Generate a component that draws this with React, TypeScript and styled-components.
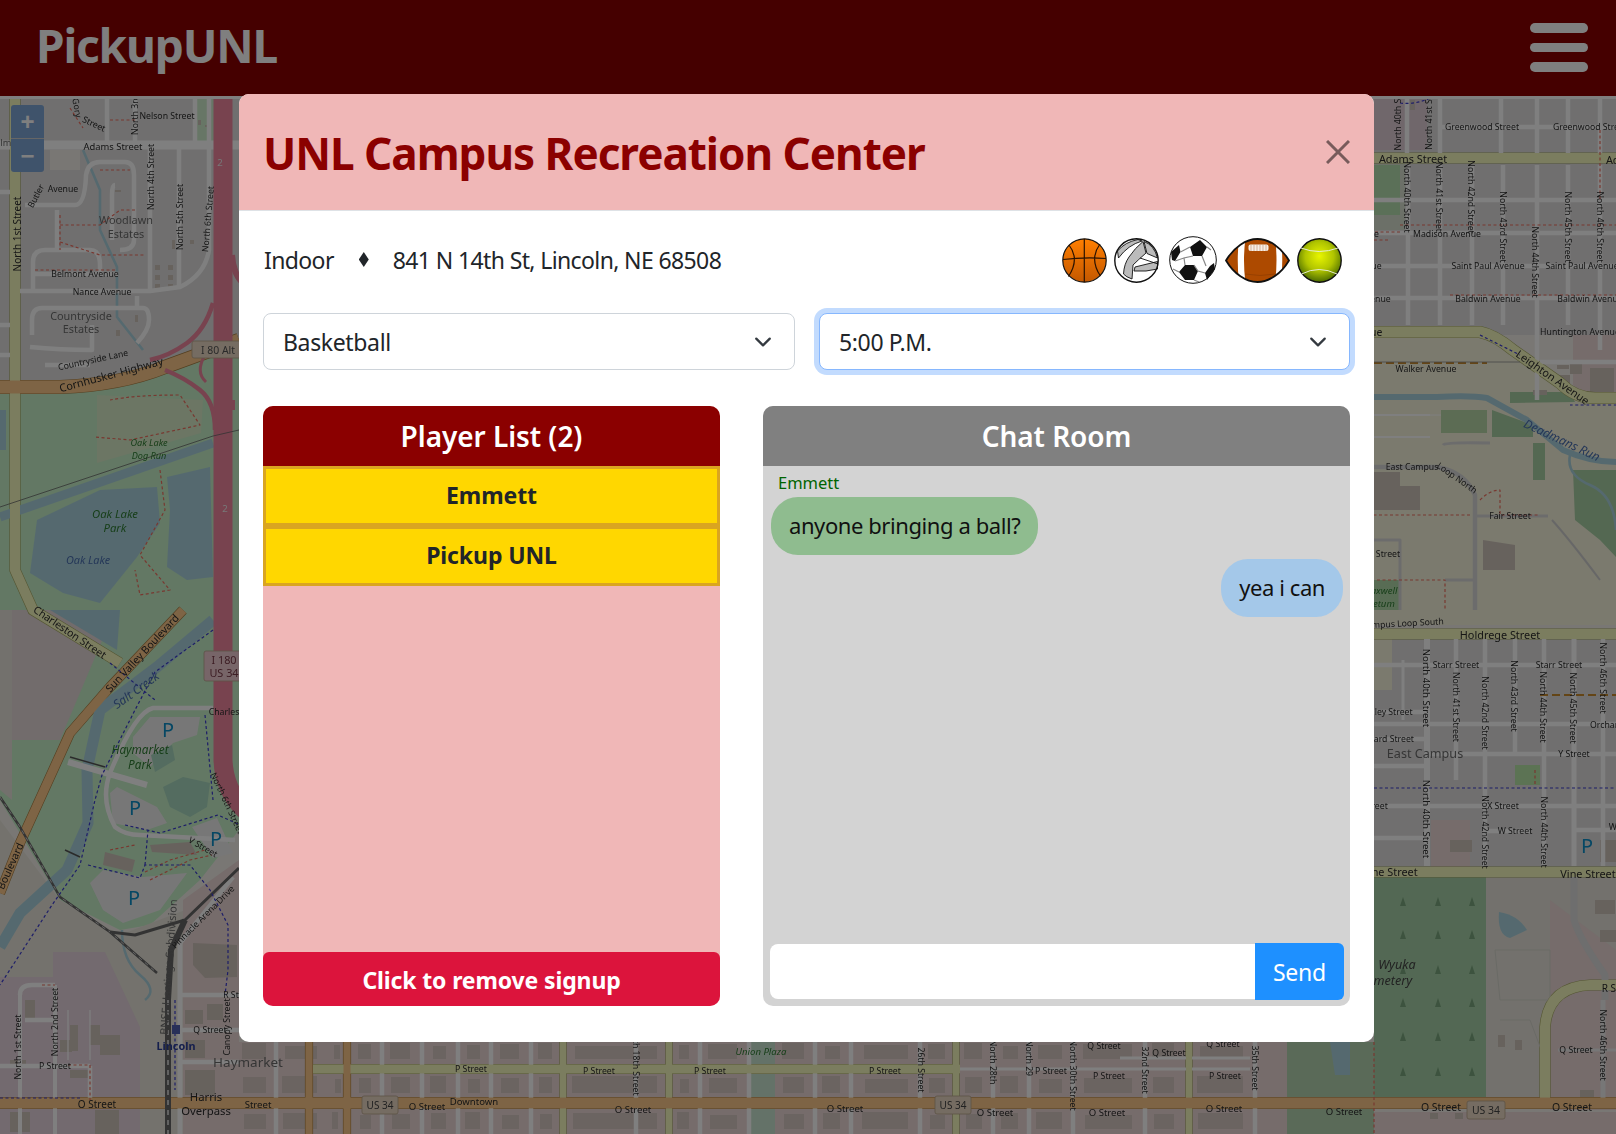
import React from "react";
import styled, { createGlobalStyle } from "styled-components";

const GlobalStyle = createGlobalStyle`
  html, body { margin: 0; padding: 0; background: #fff; }
  * { box-sizing: border-box; }
  #root { font-family: "Noto Sans", "Open Sans", sans-serif; color: #212529; }
`;

const Page = styled.div`
  position: relative;
  width: 1616px;
  height: 1134px;
  overflow: hidden;
  display: flex;
  flex-direction: column;
`;

const TopBar = styled.header`
  height: 96px;
  flex: none;
  background: #8b0000;
  display: flex;
  align-items: center;
  justify-content: space-between;
  padding: 0 28px 0 36px;
`;

const Brand = styled.div`
  color: #fff;
  font-size: 46px;
  font-weight: 700;
  letter-spacing: -1.15px;
  margin-bottom: 7px;
`;

const Burger = styled.div`
  width: 58px;
  display: flex;
  flex-direction: column;
  gap: 10px;
  margin-bottom: 1px;
`;

const BurgerBar = styled.span`
  display: block;
  height: 9.5px;
  border-radius: 5px;
  background: #fff;
`;

const MapArea = styled.main`
  position: relative;
  flex: 1;
  border-top: 3px solid #fff;
  overflow: hidden;
  background: #f2efe9;
`;

const MapSvg = styled.svg`
  display: block;
  width: 1616px;
  height: 1035px;
  filter: blur(0.55px);
`;

const ZoomControl = styled.div`
  position: absolute;
  left: 11px;
  top: 6px;
  width: 33px;
  height: 67px;
  border-radius: 3px;
  background: #7ea6d6;
  display: flex;
  flex-direction: column;
`;

const ZoomButton = styled.div`
  flex: 1;
  display: flex;
  align-items: center;
  justify-content: center;
  color: #fff;
  font: 700 24px "Liberation Sans", sans-serif;
  & + & { border-top: 1px solid #ccc; }
`;

const Backdrop = styled.div`
  position: absolute;
  inset: 0;
  background: rgba(0, 0, 0, 0.5);
`;

const Modal = styled.section`
  position: absolute;
  left: 239px;
  top: 94px;
  width: 1135px;
  height: 948px;
  background: #fff;
  border-radius: 10px;
  display: flex;
  flex-direction: column;
  overflow: hidden;
`;

const ModalHead = styled.div`
  height: 117px;
  flex: none;
  background: #f0b7b7;
  border-bottom: 1px solid #dee2e6;
  display: flex;
  align-items: center;
  justify-content: space-between;
  padding: 0 24px;
`;

const ModalTitle = styled.h1`
  margin: 0;
  color: #8b0000;
  font-size: 44px;
  font-weight: 700;
  letter-spacing: -1px;
  line-height: 1;
  padding-top: 1px;
`;

const CloseIcon = styled.svg`
  width: 24px;
  height: 24px;
  display: block;
`;

const ModalBody = styled.div`
  flex: 1;
  min-height: 0;
  display: flex;
  flex-direction: column;
  padding: 0 24px 36px;
`;

const InfoRow = styled.div`
  height: 98px;
  margin-bottom: 4px;
  flex: none;
  display: flex;
  align-items: center;
  justify-content: space-between;
  font-size: 23px;
  letter-spacing: -0.62px;
  padding-right: 8px;
`;

const InfoText = styled.div`
  display: flex;
  align-items: center;
  padding-left: 1px;
  padding-bottom: 1px;
`;

const Diamond = styled.span`
  width: 10px;
  height: 15px;
  margin: 0 24px 0 25px;
  background: #212529;
  clip-path: polygon(50% 0, 100% 50%, 50% 100%, 0 50%);
`;

const BallRow = styled.div`
  display: flex;
  align-items: center;
  gap: 7px;
`;

const BallIcon = styled.svg<{ $gapBefore?: number }>`
  display: block;
  flex: none;
  margin-left: ${(p) => p.$gapBefore ?? 0}px;
`;

const SelectRow = styled.div`
  display: grid;
  grid-template-columns: 532px 531px;
  gap: 24px;
  height: 57px;
  flex: none;
`;

const SelectBox = styled.div<{ $focus?: boolean }>`
  display: flex;
  align-items: center;
  justify-content: space-between;
  padding: 0 22px 0 19px;
  font-size: 23px;
  letter-spacing: -0.35px;
  background: #fff;
  border-radius: 8px;
  border: 1px solid ${(p) => (p.$focus ? "#86b7fe" : "#ced4da")};
  box-shadow: ${(p) => (p.$focus ? "0 0 0 5px #c2dbfe" : "none")};
`;

const Chevron = styled.svg`
  width: 18px;
  height: 18px;
  display: block;
`;

const PanelGrid = styled.div`
  flex: 1;
  min-height: 0;
  margin-top: 36px;
  display: grid;
  grid-template-columns: 457px 587px;
  gap: 43px;
`;

const Panel = styled.div<{ $bg: string }>`
  display: flex;
  flex-direction: column;
  min-height: 0;
  border-radius: 10px;
  overflow: hidden;
  background: ${(p) => p.$bg};
`;

const PanelHead = styled.div<{ $bg: string }>`
  height: 60px;
  flex: none;
  display: flex;
  align-items: center;
  justify-content: center;
  background: ${(p) => p.$bg};
  color: #fff;
  font-size: 28px;
  font-weight: 600;
  letter-spacing: -0.05px;
`;

const PlayerRows = styled.div`
  flex: 1;
`;

const PlayerRow = styled.div`
  height: 60px;
  padding-bottom: 2px;
  display: flex;
  align-items: center;
  justify-content: center;
  background: #ffd700;
  border: 3px solid #daa520;
  font-size: 23px;
  font-weight: 700;
  letter-spacing: -0.1px;
`;

const RemoveButton = styled.button`
  height: 54px;
  flex: none;
  border: 0;
  padding: 1px 0 0;
  border-radius: 6px;
  background: #dc143c;
  color: #fff;
  font-family: inherit;
  font-size: 23px;
  font-weight: 700;
  letter-spacing: -0.13px;
`;

const ChatLog = styled.div`
  flex: 1;
  display: flex;
  flex-direction: column;
  padding: 7px 7px 0 8px;
`;

const Sender = styled.div`
  color: #006400;
  font-size: 16.5px;
  line-height: 20px;
  margin: 0 0 4px 7px;
`;

const Bubble = styled.div<{ $mine?: boolean }>`
  align-self: ${(p) => (p.$mine ? "flex-end" : "flex-start")};
  height: 58px;
  display: flex;
  align-items: center;
  padding: 0 18px 3px;
  margin-bottom: 4px;
  border-radius: 27px;
  background: ${(p) => (p.$mine ? "#a4c8e9" : "#8fbc8f")};
  color: #111;
  font-size: 22px;
  letter-spacing: -0.42px;
`;

const Composer = styled.div`
  display: flex;
  align-items: center;
  flex: none;
  height: 57px;
  margin: 0 6px 6px 7px;
`;

const ChatInput = styled.input`
  flex: 1;
  min-width: 0;
  height: 55px;
  border: 0;
  outline: 0;
  border-radius: 8px 0 0 8px;
  background: #fff;
`;

const SendButton = styled.button`
  width: 89px;
  height: 57px;
  border: 0;
  padding: 0;
  border-radius: 0 6px 6px 0;
  background: #1e90ff;
  color: #fff;
  font-family: inherit;
  font-size: 23px;
  letter-spacing: -0.2px;
`;

const MapLabel = styled.text<{ $size?: number; $color?: string; $italic?: boolean; $bold?: boolean }>`
  font-family: "Noto Sans", "Open Sans", sans-serif;
  font-size: ${(p) => (p.$size ?? 10) * 0.87}px;
  font-style: ${(p) => (p.$italic ? "italic" : "normal")};
  font-weight: ${(p) => (p.$bold ? 700 : 400)};
  fill: ${(p) => p.$color ?? "#2c2c2c"};
  text-anchor: middle;
  dominant-baseline: central;
`;

type L = [string, number, number, number?, number?, string?, boolean?, boolean?];

const GREEN = "#2e7d32";
const WATERTXT = "#4a6fb0";
const GREY = "#6b6b6b";
const PARK = "#0c8fc8";

const labels: L[] = [
  ["Nelson Street", 167, 116], ["Gory", 77, 108, 80], ["Street", 94, 124, 25], ["North 3rd", 135, 115, -90],
  ["lmont", 13, 142, 0, 10.5, GREY], ["Adams Street", 113, 146, 0, 10.8], ["North 4th Street", 151, 177, -90],
  ["North 5th Street", 180, 217, -90], ["North 6th Street", 208, 219, -85], ["North 1st Street", 17, 234, -90, 11.5],
  ["Butler", 36, 196, -62], ["Avenue", 63, 189], ["Woodlawn", 126, 219, 0, 12.5, GREY], ["Estates", 126, 233, 0, 12.5, GREY],
  ["Belmont Avenue", 85, 274], ["Nance Avenue", 102, 292], ["Countryside", 81, 315, 0, 12.5, GREY], ["Estates", 81, 328, 0, 12.5, GREY],
  ["Countryside Lane", 93, 360, -12, 10], ["Cornhusker Highway", 111, 374, -15, 12.5], ["I 80 Alt", 218, 350, 0, 12, "#555"],
  ["2", 220, 162, 0, 11, "#eee"], ["2", 225, 508, 0, 11, "#eee"],
  ["Oak Lake", 149, 442, 0, 10.5, GREEN, true], ["Dog Run", 149, 455, 0, 10.5, GREEN, true],
  ["Oak Lake", 115, 513, 0, 13, GREEN, true], ["Park", 115, 527, 0, 13, GREEN, true], ["Oak Lake", 88, 559, 0, 12.5, WATERTXT, true],
  ["Charleston Street", 70, 632, 34, 12], ["Sun Valley Boulevard", 142, 653, -47, 12], ["Boulevard", 10, 866, -66, 12],
  ["Salt Creek", 136, 690, -36, 14, WATERTXT, true], ["Haymarket", 140, 749, 0, 13.5, GREEN, true], ["Park", 140, 764, 0, 13.5, GREEN, true],
  ["P", 168, 729, 0, 23, PARK], ["P", 135, 807, 0, 23, PARK], ["P", 216, 838, 0, 23, PARK], ["P", 134, 897, 0, 23, PARK],
  ["I 180", 224, 659, 0, 12.5, "#7a3a48"], ["US 34", 224, 672, 0, 12.5, "#7a3a48"], ["Charles", 224, 712],
  ["North 6th Street", 227, 803, 65], ["V Street", 203, 847, 30], ["Pinnacle Arena Drive", 203, 917, -45],
  ["BNSF Hastings Subdivision", 168, 967, -86, 12.5, GREY], ["R St", 231, 995], ["Q Street", 210, 1030], ["Canopy Street", 227, 1027, -90],
  ["North 1st Street", 18, 1047, -90], ["North 2nd Street", 55, 1022, -90], ["P Street", 55, 1066], ["O Street", 97, 1104, 0, 11.5],
  ["Lincoln", 176, 1045, 0, 12.5, "#2b3f9a", false, true], ["Haymarket", 248, 1062, 0, 15.5, GREY], ["Harris", 206, 1096, 0, 13], ["Overpass", 206, 1110, 0, 13],

  ["P Street", 471, 1069], ["P Street", 599, 1071], ["P Street", 710, 1071], ["P Street", 885, 1071], ["P Street", 1051, 1071],
  ["P Street", 1109, 1076], ["P Street", 1225, 1076], ["Q Street", 1104, 1046], ["Q Street", 1169, 1053], ["Q Street", 1223, 1044],
  ["Street", 258, 1104, 0, 11], ["O Street", 427, 1106, 0, 11], ["O Street", 633, 1109, 0, 11], ["O Street", 845, 1108, 0, 11],
  ["O Street", 995, 1112, 0, 11], ["O Street", 1107, 1112, 0, 11], ["O Street", 1224, 1108, 0, 11], ["O Street", 1344, 1111, 0, 11],
  ["Downtown", 474, 1101, 0, 11], ["US 34", 380, 1105, 0, 11.5, "#444"], ["US 34", 953, 1105, 0, 11.5, "#444"],
  ["Union Plaza", 761, 1051, 0, 11, GREEN, true], ["North 18th Street", 636, 1060, 90], ["26th Street", 921, 1070, 90],
  ["North 28th", 993, 1062, 90], ["North 29", 1029, 1058, 90], ["North 30th Street", 1073, 1075, 90], ["32nd Street", 1145, 1070, 90], ["35th Street", 1255, 1068, 90],

  ["Greenwood Street", 1482, 127], ["Greenwood Street", 1590, 127], ["North 40th St", 1398, 123, -90], ["North 41st St", 1429, 123, -90],
  ["Adams Street", 1413, 158, 0, 12.5], ["Adams Street", 1640, 159, 0, 12.5], ["North 40th Street", 1407, 197, 90], ["North 41st Street", 1439, 197, 90],
  ["North 42nd Street", 1471, 197, 90], ["North 43rd Street", 1503, 227, 90], ["North 44th Street", 1535, 262, 90], ["North 45th Street", 1568, 227, 90],
  ["North 46th Street", 1600, 227, 90], ["Madison Avenue", 1447, 234], ["Madison Avenue", 1345, 234], ["Saint Paul Avenue", 1488, 266], ["Saint Paul Avenue", 1582, 266],
  ["Saint Paul Avenue", 1345, 266], ["Baldwin Avenue", 1488, 299], ["Baldwin Avenue", 1590, 299], ["Baldwin Avenue", 1358, 299], ["Huntington Avenue", 1580, 332],
  ["Leighton Avenue", 1341, 332, 0, 12], ["Walker Avenue", 1426, 369], ["Leighton Avenue", 1553, 377, 35, 12.5], ["Deadmans Run", 1562, 440, 25, 14, WATERTXT, true],
  ["East Campus", 1412, 467], ["Loop North", 1457, 478, 35], ["Fair Street", 1510, 516], ["Street", 1388, 554], ["Maxwell", 1380, 590, 0, 11, GREEN, true], ["Arboretum", 1372, 603, 0, 11, GREEN, true],
  ["East Campus Loop South", 1393, 624, -3], ["Holdrege Street", 1500, 634, 0, 12.5], ["North 40th Street", 1426, 688, 90, 11], ["North 41st Street", 1456, 707, 90],
  ["North 42nd Street", 1485, 713, 90], ["North 43rd Street", 1514, 696, 90], ["North 44th Street", 1543, 707, 90], ["North 45th Street", 1573, 708, 90], ["North 46th Street", 1603, 678, 90],
  ["Starr Street", 1456, 665], ["Starr Street", 1559, 665], ["Bradley Street", 1384, 712], ["Orchard Street", 1384, 739], ["Orchard Street", 1620, 725],
  ["East Campus", 1425, 753, 0, 14.5, GREY], ["Y Street", 1574, 754], ["X Street", 1372, 806], ["X Street", 1503, 806], ["W Street", 1515, 831],
  ["North 40th Street", 1426, 819, 90, 11], ["North 42nd Street", 1485, 832, 90], ["North 44th Street", 1544, 832, 90], ["W Street", 1626, 827],
  ["P", 1587, 845, 0, 23, PARK], ["Vine Street", 1390, 871, 0, 12.5], ["Vine Street", 1588, 873, 0, 12.5], ["Wyuka", 1397, 964, 0, 14.5, "#444", true], ["Cemetery", 1386, 980, 0, 14.5, "#444", true],
  ["R Street", 1620, 988, 0, 11.5], ["North 46th Street", 1603, 1045, 90], ["Q Street", 1576, 1050], ["O Street", 1441, 1107, 0, 12], ["O Street", 1572, 1107, 0, 12], ["US 34", 1486, 1110, 0, 12, "#444"],
];

type Sh = [string, string];

const areas: Sh[] = [
  ["M0 99H239V395H0Z", "#e0dfdf"],
  ["M0 385L60 385L190 365L239 340V830L200 880L150 925L120 930L60 900L0 800Z", "#c6f0c8"],
  ["M50 150H80V170H50Z", "#f2efe9"],
  ["M12 610H115L60 740H12Z", "#e4d8d8"],
  ["M0 610H12V800L0 790Z", "#e6e3da"],
  ["M0 820L60 900L120 935L185 910L185 1134H0Z", "#e8e5da"],
  ["M0 977H53V952H105L140 1027V1134H0Z", "#e6d4de"],
  ["M183 900L239 860V1134H183Z", "#ecd8d6"],
  ["M97 395L203 400L201 433L97 463Z", "#d8ecc8"],
  ["M37 520L100 490L157 487L160 523L137 557L100 603L63 593L30 573Z", "#aad3df"],
  ["M167 477L210 467L213 577L187 580L167 567L170 510Z", "#aad3df"],
  ["M50 610H120L117 650Z", "#aad3df"],
  ["M0 410H6V450H0Z", "#aad3df"],
  ["M133 737L150 717L200 717L197 735L173 743L150 767L133 753Z", "#efefef"],
  ["M110 793L117 787L157 807L167 823L147 830L113 823Z", "#efefef"],
  ["M90 883L103 870L143 877L187 873L160 910L123 923L103 910Z", "#efefef"],
  ["M192 827L217 818L233 853L213 858Z", "#efefef"],
  ["M105 852L135 860L132 872L103 865Z", "#cfc4bb"],
  ["M163 787L183 777L210 783L207 807L190 817L170 807Z", "#a8d8c0"],
  ["M151 755L172 745L175 760L155 772Z", "#a8d8c0"],
  ["M150 845L190 842L197 855L152 852Z", "#cfc4bb"],
  ["M193 943L237 945V977L205 978L193 965Z", "#cfc4bb"],
  ["M195 99H215V145H197Z", "#cfeccd"],

  ["M239 1042H1374V1134H239Z", "#ecd8d6"],
  ["M1287 1042H1374V1134H1287Z", "#b5d4b0"],
  ["M1330 1042H1350V1075H1335Z", "#aad3df"],
  ["M750 1042H775V1134H750Z", "#c9e4d0"],

  ["M1374 99H1616V335H1374Z", "#e0dfdf"],
  ["M1374 99H1427V150H1374Z", "#e0cfd6"],
  ["M1374 163H1405V230H1374Z", "#d8e0d0"],
  ["M1374 165H1400V215H1374Z", "#b6e0b0"],
  ["M1374 335H1480L1560 388L1590 402H1616V625H1374Z", "#f6f4dc"],
  ["M1573 335H1616V398H1590L1573 385Z", "#ecd8d6"],
  ["M1510 392L1570 392L1575 402L1510 403Z", "#a8d0a4"],
  ["M1492 410L1533 425V437H1492Z", "#a8d0a4"],
  ["M1533 443H1545V480H1533Z", "#a8d0a4"],
  ["M1573 470L1616 470V557L1600 540L1575 520Z", "#a8d0a4"],
  ["M1441 410H1487V433H1441Z", "#b8d8a8"],
  ["M1374 472H1400V486H1420V510H1374Z", "#cfc4bb"],
  ["M1374 580H1400V610H1374Z", "#b0d8a8"],
  ["M1483 540L1515 545V570H1483Z", "#cfc4bb"],
  ["M1374 639H1616V877H1374Z", "#e0dfdf"],
  ["M1374 639H1392V690H1374Z", "#f6f4dc"],
  ["M1431 820H1470V870H1431Z", "#ecd8d6"],
  ["M1515 765H1540V785H1515Z", "#b9e6a8"],
  ["M1374 877H1486V1100H1374Z", "#a6d0a8"],
  ["M1486 877H1616V1100H1486Z", "#e6e3da"],
  ["M1550 900L1616 950V1110H1550Z", "#ecd8d6"],
  ["M1499 912Q1518 915 1527 930L1510 938Q1497 935 1499 912Z", "#aad3df"],
  ["M1374 1112H1616V1134H1374Z", "#ecd8d6"],
];

type Ln = { d: string; c: string; w: number; dash?: string; casing?: string };

const white = (d: string, w = 4.5): Ln => ({ d, c: "#fff", w });
const olive = (d: string, w = 10): Ln => ({ d, c: "#f7fabf", w, casing: "#a9ad66" });
const tan = (d: string, w = 11): Ln => ({ d, c: "#fcc98a", w, casing: "#a87d40" });
const pinkRoad = (d: string, w = 16): Ln => ({ d, c: "#f0869f", w });
const salmon = (d: string): Ln => ({ d, c: "#f07060", w: 1.2, dash: "3 2.5" });
const blue = (d: string): Ln => ({ d, c: "#3a3ad0", w: 1.2, dash: "3 2.5" });
const water = (d: string, w = 9): Ln => ({ d, c: "#aad3df", w });
const rail = (d: string, w = 3): Ln => ({ d, c: "#666", w });

const lines: Ln[] = [
  water("M0 517L213 443", 9),
  water("M83 150L100 190V230L117 267V317L143 350", 2.6),
  water("M213 620L157 667L100 710L87 770L88 823L67 870L20 913L0 947", 11),
  water("M122 930Q122 960 140 975T145 1000", 2.5),
  water("M1374 397H1437Q1470 395 1487 398L1527 420L1563 450Q1590 462 1616 462", 6),
  water("M1570 455Q1566 475 1590 485T1616 530", 2.6),

  white("M0 145H239", 9), white("M107 99V145"), white("M135 99V145"), white("M195 99V145"), white("M209 99V145"),
  white("M150 148V290"), white("M179 148V287"), white("M209 148V250Q205 275 180 287L150 291H20", 4.5),
  white("M0 192H12"), white("M25 205H57H75Q85 205 86 175Q88 162 100 162H125Q134 162 134 175V240Q134 250 120 250"),
  white("M115 185Q112 185 112 195V240"), white("M57 210V250"), white("M33 290V262Q33 250 45 250H90Q100 250 100 265V275"), white("M33 274H118"),
  white("M32 335V320Q32 308 42 308H143Q149 308 149 320Q149 330 137 343"), white("M30 347Q60 350 92 350V325"), white("M45 365H90"), white("M0 325H20"), white("M0 355H20"),
  white("M137 296V308"),
  white("M213 708H153Q135 712 110 773Q100 800 115 827Q125 835 140 835L235 840", 4.5), white("M68 762L147 785", 6),
  white("M180 943L233 877", 4.5), white("M180 943V1134", 5), white("M180 995H239"), white("M180 1030H239"), white("M180 1062H239"),
  white("M20 995V1134", 4), white("M55 985V1134", 4), white("M0 1066H90"), white("M90 1066V1100"), white("M20 995Q20 985 32 985H55"),
  white("M25 1020H55"), white("M90 1010V1060", 1.2), white("M68 1010V1060", 1.2),

  white("M276 1042V1134"), white("M382 1042V1134"), white("M422 1042V1134"), white("M458 1042V1134"), white("M491 1042V1134"), white("M531 1042V1134"),
  white("M636 1042V1134"), white("M700 1042V1134"), white("M749 1042V1134"), white("M815 1042V1134"), white("M851 1042V1134"), white("M920 1042V1134"),
  white("M993 1042V1134"), white("M1029 1042V1134"), white("M1073 1042V1134"), white("M1145 1042V1134"), white("M1255 1042V1134"), white("M1120 1058H1250", 3), white("M960 1069H1250", 3),

  white("M1407 99V158"), white("M1440 99V158"), white("M1501 99V158"), white("M1537 99V158"), white("M1568 99V158"), white("M1600 99V158"),
  white("M1440 127H1616"), white("M1374 200H1616"), white("M1374 233H1616"), white("M1374 266H1616"), white("M1374 298H1616"),
  white("M1408 165V325"), white("M1440 165V325"), white("M1472 165V325"), white("M1503 165V325"), white("M1537 165V400"), white("M1568 165V325"), white("M1600 165V350"),
  white("M1540 362H1616"), white("M1441 415H1430", 1), white("M1374 415H1430", 2), white("M1374 437H1430", 2),
  { d: "M1374 467H1437Q1465 472 1475 495V610", c: "#d9d9d9", w: 4.5 },
  { d: "M1477 516H1548", c: "#d9d9d9", w: 3 }, { d: "M1443 445Q1445 442 1490 443", c: "#d9d9d9", w: 3 },
  { d: "M1552 520Q1570 540 1600 580", c: "#cfcfcf", w: 2 }, { d: "M1374 540H1400V610", c: "#d9d9d9", w: 3 }, { d: "M1445 580H1477", c: "#d9d9d9", w: 3 },
  { d: "M1374 363H1487", c: "#c98a2c", w: 2, dash: "8 4" },

  white("M1374 665H1616"), white("M1374 712H1427"), white("M1374 724H1616"), white("M1374 739H1427"), white("M1427 754H1616"), white("M1374 766H1427"),
  white("M1374 806H1616"), white("M1374 838H1427"), white("M1485 831H1530"), white("M1574 830H1616"),
  white("M1403 660V720", 3), white("M1427 639V866", 6), white("M1456 639V780"), white("M1485 639V866"), white("M1515 639V756"), white("M1544 639V866"), white("M1574 639V866", 5), white("M1603 639V866"),
  { d: "M1574 875V920Q1580 940 1605 975V1000", c: "#dcdcdc", w: 7 },
  { d: "M1603 1000V1105", c: "#eee", w: 5 }, { d: "M1558 1050H1616", c: "#eee", w: 3 },
  { d: "M1495 950H1550V1000L1500 1000Z", c: "#d5d5cc", w: 1 }, { d: "M1500 1020H1530L1545 1060", c: "#d5d5cc", w: 1 },
  { d: "M1540 695H1616", c: "#c98a2c", w: 2, dash: "8 4" },

  olive("M15 99V570L33 610L120 663", 10),
  olive("M1374 158H1616"), olive("M1374 332H1480Q1495 335 1513 350L1560 383Q1575 398 1595 398H1616", 11),
  olive("M1374 634H1616"), olive("M1374 872H1616"), olive("M1545 1103V1027Q1548 987 1590 985H1616", 10),
  olive("M313 1069H960", 9), olive("M563 1042V1134", 6), olive("M669 1042V1134", 6), olive("M956 1042V1134", 6), olive("M1189 1042V1134", 6),

  tan("M309 1042V1134", 7), tan("M347 1042V1134", 7),
  tan("M0 387H60Q120 385 165 367L239 340", 13),
  tan("M183 610L110 687L70 733L20 843L0 893", 9),
  tan("M0 1103H239H1616", 11),

  pinkRoad("M223 99V760Q224 790 245 810", 19), pinkRoad("M213 303Q205 330 187 343T150 360", 4.5), pinkRoad("M165 370Q185 378 200 390T215 430", 4.5),
  pinkRoad("M232 255Q233 275 245 285", 6), pinkRoad("M205 355Q195 372 206 382", 3), pinkRoad("M232 400V410", 6),

  rail("M0 797L20 827L60 897L110 932L157 973", 2.5),
  { d: "M0 797L20 827L60 897L110 932L157 973", c: "#ccc", w: 1, dash: "4 4" },
  rail("M110 932L135 935L185 920L239 868", 3), rail("M185 920L171 950L168 1000V1134", 6),
  { d: "M168 1000V1134", c: "#ddd", w: 1.6, dash: "5 5" },
  { d: "M0 507L213 436L239 430", c: "#666", w: 0.8 },
  { d: "M1374 362H1520", c: "#8d8d8d", w: 0.8 },
  { d: "M70 757L105 767", c: "#555", w: 1.4 }, { d: "M65 850L80 857", c: "#555", w: 1.6 },

  salmon("M60 225H100L120 210H135"), salmon("M60 242L100 255L145 255"), salmon("M35 270H115"), salmon("M100 170H130"), salmon("M60 215V250"),
  salmon("M70 108L83 128"), salmon("M110 120H135"), salmon("M110 400Q135 395 180 395L200 425L130 440L95 437"),
  salmon("M160 470L165 510L140 555L170 590L140 595L135 570"), salmon("M110 850L135 845"), salmon("M150 880L190 860L212 855"), salmon("M145 872L170 860L205 850"),
  salmon("M42 985H55"), salmon("M68 1065H90V1100"),
  salmon("M1374 240H1390"), salmon("M1450 295H1616"), salmon("M1400 225H1616"), salmon("M1600 130V200"), salmon("M1375 232H1400"), salmon("M1377 580H1445V610"), salmon("M1480 500Q1490 490 1500 490V515H1540"), salmon("M1470 515H1374"), salmon("M1535 770V785"),
  salmon("M1374 1042V1134"),

  blue("M110 663L155 700"), blue("M213 630L155 672L135 710L102 775L95 800L80 865L52 905L0 985"), blue("M205 715L213 800"),
  blue("M125 825L160 833L218 815L240 825"), blue("M88 865L140 878L145 865H190L210 890L228 925V970L225 995"), blue("M145 865L148 830"),
  blue("M175 1000V1090"), blue("M0 1098H80"),
  blue("M1374 788H1616"), blue("M1480 335L1520 355"), blue("M1570 405Q1580 405 1616 405"), blue("M1400 103Q1415 105 1430 98"),
];

const Trees = () => {
  const xs = [1403, 1438, 1472];
  const ys = [902, 935, 970, 1003, 1037, 1072];
  return (
    <g fill="#7aa77f">
      {xs.flatMap((x) => ys.map((y) => <path key={`${x}-${y}`} d={`M${x} ${y - 5}l3 9h-6z`} />))}
    </g>
  );
};

const Blocks = () => {
  const out: React.ReactNode[] = [];
  const columns: [number, number][] = [[240, 34], [280, 45], [330, 14], [355, 24], [388, 30], [428, 26], [463, 25], [497, 30], [536, 24], [570, 95], [675, 22], [705, 40], [780, 32], [820, 28], [860, 56], [925, 28], [962, 28], [998, 28], [1034, 36], [1080, 60], [1150, 32], [1195, 56]];
  const rows: [number, number][] = [[1043, 20], [1076, 21], [1112, 21]];
  columns.forEach(([x, w], i) =>
    rows.forEach(([y, h], j) => {
      const a = (i * 7 + j * 5) % 4;
      out.push(<rect key={`a${i}-${j}`} x={x + 2 + a} y={y + a} width={Math.max(6, w - 10 - a)} height={h - a - 4} fill="#d6c8c2" />);
    })
  );
  const right: [number, number, number, number][] = [[1410, 100, 5, 10], [1533, 390, 14, 5], [1557, 365, 12, 4], [1590, 368, 24, 25], [1570, 360, 12, 14], [1560, 375, 10, 14], [1610, 395, 6, 2], [1450, 840, 22, 12], [1600, 840, 16, 22], [1498, 1035, 7, 12], [1515, 1040, 7, 10], [1580, 1090, 14, 8], [1595, 900, 20, 14], [1600, 930, 16, 12], [1430, 1113, 8, 6], [1455, 1113, 8, 6]];
  right.forEach(([x, y, w, h], i) => out.push(<rect key={`r${i}`} x={x} y={y} width={w} height={h} fill="#cfc4bb" />));
  const left: [number, number, number, number][] = [[155, 265, 5, 5], [168, 265, 5, 5], [155, 275, 5, 5], [168, 275, 5, 5], [155, 284, 5, 5], [168, 284, 5, 5], [135, 315, 3, 7], [116, 330, 4, 6], [172, 240, 3, 9], [115, 190, 6, 2], [198, 120, 3, 5], [205, 125, 2, 2], [190, 240, 4, 4], [25, 1000, 10, 20], [60, 1040, 12, 12], [10, 1060, 16, 8], [70, 1025, 8, 26], [90, 1025, 10, 20], [100, 1035, 20, 20], [95, 1110, 24, 24], [10, 1112, 20, 20], [185, 1010, 18, 14], [207, 1004, 16, 16], [185, 1040, 20, 18], [185, 1070, 30, 25], [70, 1070, 20, 8]];
  left.forEach(([x, y, w, h], i) => out.push(<rect key={`l${i}`} x={x} y={y} width={w} height={h} fill="#cfc4bb" />));
  return <>{out}</>;
};

const Shield = ({ x, y, w, h, fill = "#ebd9c4" }: { x: number; y: number; w: number; h: number; fill?: string }) => (
  <rect x={x} y={y} width={w} height={h} rx={2} fill={fill} stroke="#b9a58c" strokeWidth={0.8} />
);

const CityMap = () => (
  <MapSvg viewBox="0 99 1616 1035">
    {areas.map(([d, c], i) => <path key={i} d={d} fill={c} />)}
    <Blocks />
    <Trees />
    {lines.filter((l) => l.casing).map((l, i) => (
      <path key={`c${i}`} d={l.d} fill="none" stroke={l.casing} strokeWidth={l.w + 1.2} />
    ))}
    {lines.map((l, i) => (
      <path key={i} d={l.d} fill="none" stroke={l.c} strokeWidth={l.w} strokeDasharray={l.dash} strokeLinejoin="round" />
    ))}
    <Shield x={192} y={341} w={60} h={17} />
    <Shield x={204} y={651} w={44} h={30} fill="#eecbd0" />
    <Shield x={362} y={1096} w={36} h={18} />
    <Shield x={935} y={1096} w={36} h={18} />
    <Shield x={1467} y={1101} w={38} h={18} />
    <rect x={172} y={1025} width={8} height={9} fill="#5060b0" />
    {labels.map(([t, x, y, r, s, c, it, b], i) => (
      <MapLabel key={i} x={x} y={y} $size={s} $color={c} $italic={it} $bold={b} transform={r ? `rotate(${r} ${x} ${y})` : undefined}>{t}</MapLabel>
    ))}
  </MapSvg>
);

const Basketball = () => (
  <BallIcon width={45} height={45} viewBox="0 0 45 45">
    <defs>
      <linearGradient id="bb" x1="0" y1="0" x2="0" y2="1"><stop offset="0" stopColor="#ff7f00" /><stop offset="1" stopColor="#c45800" /></linearGradient>
    </defs>
    <circle cx="22.5" cy="22.5" r="21.7" fill="url(#bb)" stroke="#111" strokeWidth="1.2" />
    <path d="M22.3 1V44M1 21.5Q22 19 44 20.5M7 7Q18 21 6.5 38.5M38 6Q27 21 38.5 38" fill="none" stroke="#2a1200" strokeWidth="1.2" />
  </BallIcon>
);

const Volleyball = () => (
  <BallIcon width={45} height={45} viewBox="0 0 45 45">
    <circle cx="22.5" cy="22.5" r="21.7" fill="#fff" />
    <path d="M3.5 13Q11 4 24 1.5L28 3Q14 7 4.5 20Z" fill="#bbb" stroke="#111" strokeWidth="0.9" />
    <path d="M29 3.5L32 15Q24 22 19 27L18 41Q12 39 9.5 36Q10 26 15 19Q21 10 29 3.5Z" fill="#bbb" stroke="#111" strokeWidth="0.9" />
    <path d="M30 3.5Q40 7 43.5 20L33 15.5Z" fill="#bbb" stroke="#111" strokeWidth="0.9" />
    <path d="M21 29L43.5 23.5V31L32 33L20 33Z" fill="#bbb" stroke="#111" strokeWidth="0.9" />
    <path d="M26 20L44 26" fill="none" stroke="#111" strokeWidth="0.9" />
    <circle cx="22.5" cy="22.5" r="21.7" fill="none" stroke="#111" strokeWidth="1.4" />
  </BallIcon>
);

const Soccer = () => (
  <BallIcon $gapBefore={3} width={48} height={48} viewBox="0 0 48 48">
    <circle cx="24" cy="24" r="23.3" fill="#fff" stroke="#111" strokeWidth="1" />
    <path d="M31 4L38 11L33 20H24L21 11ZM2 16L10 9L11.5 16L6 25L3 24ZM16 29H25L29 35L25 44H16L10 36ZM45 27L46 33L38 44L36 37L41 30Z" fill="#111" />
    <path d="M24 20L15 22L16 29M33 20L37 30M25 29L29 35L36 37M11.5 16L21 11M15 22L6 25M10 36L4 33M25 44L30 46M38 11L42 14" fill="none" stroke="#888" strokeWidth="1.2" />
  </BallIcon>
);

const FOOTBALL_OUTLINE = "M1 22.5C9 9 21 1 32.5 1S56 9 64 22.5C56 36 44 44 32.5 44S9 36 1 22.5Z";

const Football = () => (
  <BallIcon $gapBefore={1} width={65} height={45} viewBox="0 0 65 45">
    <defs>
      <clipPath id="fbclip"><path d={FOOTBALL_OUTLINE} /></clipPath>
    </defs>
    <path d={FOOTBALL_OUTLINE} fill="#ad4a00" />
    <g clipPath="url(#fbclip)">
      <path d="M14 0H20.5Q17.5 22 20.5 45H14Q11.5 22 14 0ZM50 0H56Q58.5 22 56 45H50Q53 22 50 0Z" fill="#fff" />
    </g>
    <rect x="23.5" y="6.5" width="20" height="6.5" rx="2" fill="#f7efe6" />
    <path d="M26 6.5V13M29 6.5V13M32 6.5V13M35 6.5V13M38 6.5V13M41 6.5V13" stroke="#c49a78" strokeWidth="0.7" />
    <path d="M20 36Q35 39 50 36" fill="none" stroke="#8a3a00" strokeWidth="0.6" />
    <path d={FOOTBALL_OUTLINE} fill="none" stroke="#111" strokeWidth="1.8" />
  </BallIcon>
);

const Tennis = () => (
  <BallIcon width={45} height={45} viewBox="0 0 45 45">
    <defs>
      <radialGradient id="tb" cx="0.5" cy="0.4" r="0.6"><stop offset="0" stopColor="#e8f500" /><stop offset="0.55" stopColor="#b0c400" /><stop offset="1" stopColor="#4a6a00" /></radialGradient>
    </defs>
    <circle cx="22.5" cy="22.5" r="21.7" fill="url(#tb)" stroke="#111" strokeWidth="1.4" />
    <path d="M4 10Q22 17 41 10M4.5 36Q22 27 40 36" fill="none" stroke="#e6ecd0" strokeWidth="1" />
  </BallIcon>
);

const DownChevron = () => (
  <Chevron viewBox="0 0 16 16">
    <path d="m2 5 6 6 6-6" fill="none" stroke="#343a40" strokeWidth="2" strokeLinecap="round" strokeLinejoin="round" />
  </Chevron>
);

export default function App() {
  return (
    <Page>
      <GlobalStyle />
      <TopBar>
        <Brand>PickupUNL</Brand>
        <Burger><BurgerBar /><BurgerBar /><BurgerBar /></Burger>
      </TopBar>
      <MapArea>
        <CityMap />
        <ZoomControl><ZoomButton>+</ZoomButton><ZoomButton>−</ZoomButton></ZoomControl>
      </MapArea>
      <Backdrop />
      <Modal>
        <ModalHead>
          <ModalTitle>UNL Campus Recreation Center</ModalTitle>
          <CloseIcon viewBox="0 0 24 24">
            <path d="M1 1L23 23M23 1L1 23" stroke="#000" strokeOpacity="0.5" strokeWidth="3" />
          </CloseIcon>
        </ModalHead>
        <ModalBody>
          <InfoRow>
            <InfoText>Indoor<Diamond />841 N 14th St, Lincoln, NE 68508</InfoText>
            <BallRow><Basketball /><Volleyball /><Soccer /><Football /><Tennis /></BallRow>
          </InfoRow>
          <SelectRow>
            <SelectBox><span>Basketball</span><DownChevron /></SelectBox>
            <SelectBox $focus><span>5:00 P.M.</span><DownChevron /></SelectBox>
          </SelectRow>
          <PanelGrid>
            <Panel $bg="#f0b7b7">
              <PanelHead $bg="#8b0000">Player List (2)</PanelHead>
              <PlayerRows>
                <PlayerRow>Emmett</PlayerRow>
                <PlayerRow>Pickup UNL</PlayerRow>
              </PlayerRows>
              <RemoveButton>Click to remove signup</RemoveButton>
            </Panel>
            <Panel $bg="#d3d3d3">
              <PanelHead $bg="#808080">Chat Room</PanelHead>
              <ChatLog>
                <Sender>Emmett</Sender>
                <Bubble>anyone bringing a ball?</Bubble>
                <Bubble $mine>yea i can</Bubble>
              </ChatLog>
              <Composer>
                <ChatInput />
                <SendButton>Send</SendButton>
              </Composer>
            </Panel>
          </PanelGrid>
        </ModalBody>
      </Modal>
    </Page>
  );
}
